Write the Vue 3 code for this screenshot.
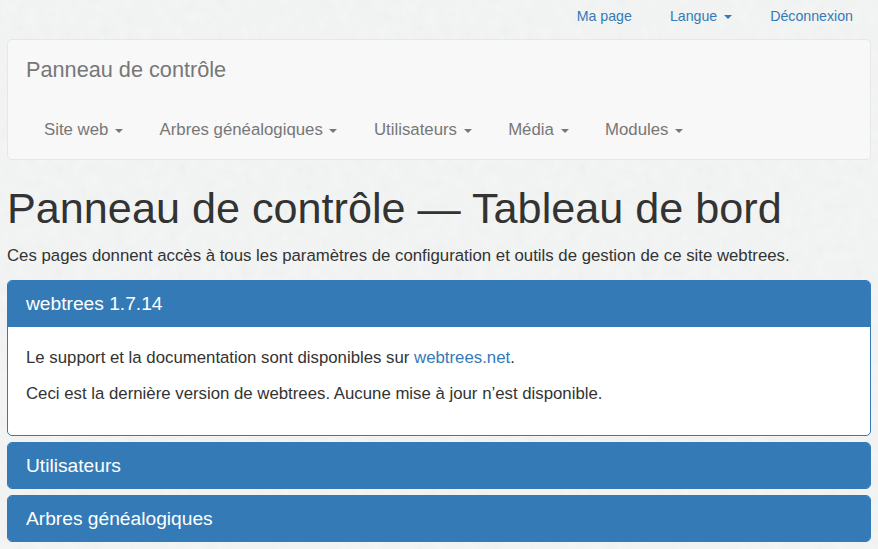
<script setup>
const menus = ['Site web', 'Arbres généalogiques', 'Utilisateurs', 'Média', 'Modules']
</script>

<template>
  <div class="page">
    <ul class="top-links">
      <li><a href="#">Ma page</a></li>
      <li><a href="#">Langue <span class="caret"></span></a></li>
      <li><a href="#">Déconnexion</a></li>
    </ul>

    <nav class="navbar">
      <a class="brand" href="#">Panneau de contrôle</a>
      <ul class="nav">
        <li v-for="menu in menus" :key="menu">
          <a href="#">{{ menu }} <span class="caret"></span></a>
        </li>
      </ul>
    </nav>

    <h1>Panneau de contrôle — Tableau de bord</h1>
    <p class="intro">Ces pages donnent accès à tous les paramètres de configuration et outils de gestion de ce site webtrees.</p>

    <section class="panel">
      <h2 class="panel-heading">webtrees 1.7.14</h2>
      <div class="panel-body">
        <p>Le support et la documentation sont disponibles sur <a href="#">webtrees.net</a>.</p>
        <p>Ceci est la dernière version de webtrees. Aucune mise à jour n’est disponible.</p>
      </div>
    </section>

    <section class="panel closed">
      <h2 class="panel-heading">Utilisateurs</h2>
    </section>

    <section class="panel closed">
      <h2 class="panel-heading">Arbres généalogiques</h2>
    </section>
  </div>
</template>

<style>
html, body {
  margin: 0;
  background: #f3f5f4;
}
</style>

<style scoped>
.page {
  height: 549px;
  overflow: hidden;
  box-sizing: border-box;
  padding: 0 7px;
  font-family: "Liberation Sans", Arial, sans-serif;
  font-size: 16.8px;
  color: #333;
  background-color: #f3f5f4;
  background-image: url("data:image/svg+xml,%3Csvg xmlns='http://www.w3.org/2000/svg' width='400' height='400'%3E%3Cfilter id='n'%3E%3CfeTurbulence type='fractalNoise' baseFrequency='0.08' numOctaves='3' stitchTiles='stitch'/%3E%3CfeColorMatrix values='0 0 0 0 0.6 0 0 0 0 0.6 0 0 0 0 0.6 0 0 0 0.18 -0.05'/%3E%3C/filter%3E%3Crect width='400' height='400' filter='url(%23n)'/%3E%3C/svg%3E");
}

a {
  text-decoration: none;
  color: #337ab7;
}

ul {
  list-style: none;
  margin: 0;
  padding: 0;
}

.caret {
  display: inline-block;
  width: 0;
  height: 0;
  margin-left: 2px;
  vertical-align: middle;
  border-top: 4px solid;
  border-right: 4px solid transparent;
  border-left: 4px solid transparent;
}

.top-links {
  display: flex;
  justify-content: flex-end;
  height: 39px;
  font-size: 14.2px;
}

.top-links a {
  display: block;
  padding: 7px 19px 0 19px;
  line-height: 18px;
}

.top-links li:last-child a {
  padding-right: 18px;
}

.top-links .caret {
  margin-left: 3px;
}

.navbar {
  box-sizing: border-box;
  height: 121px;
  border: 1px solid #e7e7e7;
  border-radius: 5px;
  background: #f8f8f8;
  padding: 0 18px;
}

.brand {
  display: block;
  height: 60px;
  font-size: 21.7px;
  line-height: 60px;
  color: #777;
}

.nav {
  display: flex;
  height: 60px;
}

.nav a {
  display: block;
  padding: 0 18.5px 0 18px;
  line-height: 60px;
  color: #777;
}

h1 {
  margin: 22px 0 0;
  font-size: 43.2px;
  font-weight: 500;
  line-height: 52px;
}

.intro {
  margin: 10px 0 0;
  line-height: 23px;
}

.panel {
  margin-top: 6px;
  border: 1px solid #337ab7;
  border-radius: 5px;
  background: #fff;
  overflow: hidden;
}

.intro + .panel {
  margin-top: 13px;
}

.panel-heading {
  margin: 0;
  padding: 0 18px;
  height: 46px;
  font-size: 19.2px;
  font-weight: 500;
  line-height: 46px;
  color: #fff;
  background: #337ab7;
}

.closed .panel-heading {
  height: 45px;
  line-height: 45px;
}

.panel-body {
  padding: 19px 18px 18px;
  height: 71px;
}

.panel-body p {
  margin: 0 0 13px;
  line-height: 23px;
}
</style>
